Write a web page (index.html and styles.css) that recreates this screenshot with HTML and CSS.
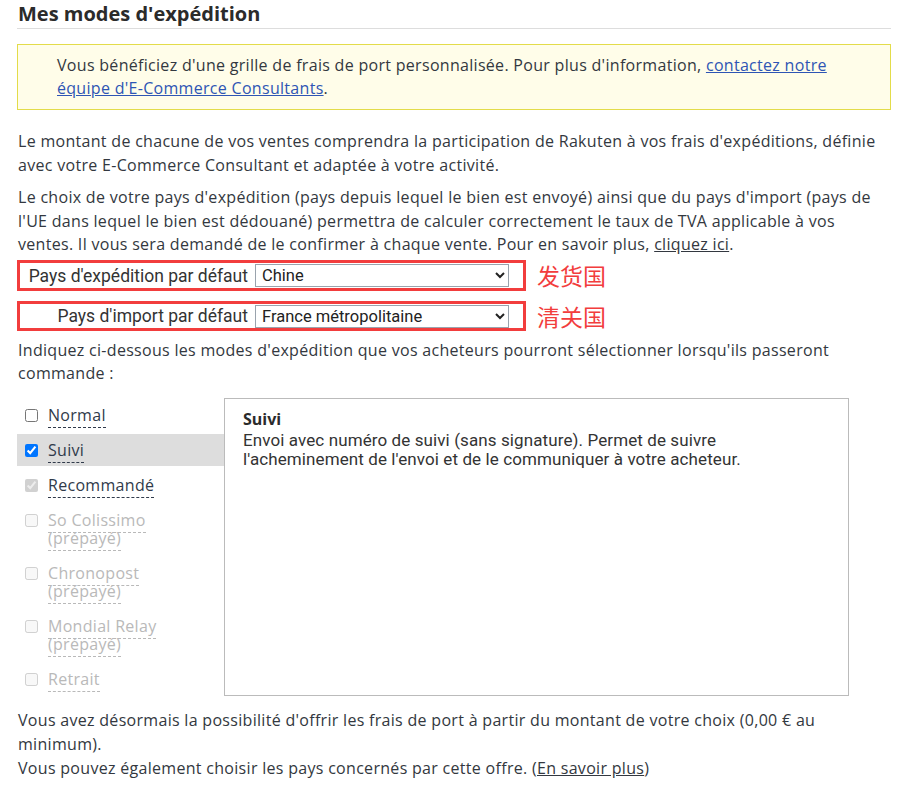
FILE: index.html
```html
<!DOCTYPE html>
<html lang="fr">
<head>
<meta charset="utf-8">
<title>Mes modes d'expédition</title>
<link rel="stylesheet" href="styles.css">
</head>
<body>
<div class="page">
  <h2 class="title">Mes modes d'expédition</h2>

  <div class="notice">
    Vous bénéficiez d'une grille de frais de port personnalisée. Pour plus d'information, <a href="#" class="link-blue">contactez notre équipe d'E-Commerce Consultants</a>.
  </div>

  <p class="para p1">Le montant de chacune de vos ventes comprendra la participation de Rakuten à vos frais d'expéditions, définie avec votre E-Commerce Consultant et adaptée à votre activité.</p>

  <p class="para p2">Le choix de votre pays d'expédition (pays depuis lequel le bien est envoyé) ainsi que du pays d'import (pays de l'UE dans lequel le bien est dédouané) permettra de calculer correctement le taux de TVA applicable à vos ventes. Il vous sera demandé de le confirmer à chaque vente. Pour en savoir plus, <a href="#" class="link-dark">cliquez ici</a>.</p>

  <div class="form-line first">
    <div class="form-row">
      <label class="form-label" for="exp">Pays d'expédition par défaut</label>
      <select id="exp" class="form-select"><option>Chine</option></select>
    </div>
    <span class="note">发货国</span>
  </div>
  <div class="form-line second">
    <div class="form-row">
      <label class="form-label" for="imp">Pays d'import par défaut</label>
      <select id="imp" class="form-select"><option>France métropolitaine</option></select>
    </div>
    <span class="note">清关国</span>
  </div>

  <p class="para p3">Indiquez ci-dessous les modes d'expédition que vos acheteurs pourront sélectionner lorsqu'ils passeront commande :</p>

  <div class="modes">
    <ul class="mode-list">
      <li class="mode"><input type="checkbox"><div class="mode-label"><span class="mode-name">Normal</span></div></li>
      <li class="mode active"><input type="checkbox" checked><div class="mode-label"><span class="mode-name">Suivi</span></div></li>
      <li class="mode"><input type="checkbox" checked disabled><div class="mode-label"><span class="mode-name">Recommandé</span></div></li>
      <li class="mode disabled"><input type="checkbox" disabled><div class="mode-label"><span class="mode-name">So Colissimo (prépayé)</span></div></li>
      <li class="mode disabled"><input type="checkbox" disabled><div class="mode-label"><span class="mode-name">Chronopost (prépayé)</span></div></li>
      <li class="mode disabled"><input type="checkbox" disabled><div class="mode-label"><span class="mode-name">Mondial Relay (prépayé)</span></div></li>
      <li class="mode disabled"><input type="checkbox" disabled><div class="mode-label"><span class="mode-name">Retrait</span></div></li>
    </ul>
    <div class="mode-detail">
      <div class="detail-title">Suivi</div>
      <div class="detail-text">Envoi avec numéro de suivi (sans signature). Permet de suivre<br>l'acheminement de l'envoi et de le communiquer à votre acheteur.</div>
    </div>
  </div>

  <p class="para p4">Vous avez désormais la possibilité d'offrir les frais de port à partir du montant de votre choix (0,00 € au minimum).<br>Vous pouvez également choisir les pays concernés par cette offre. (<a href="#" class="link-dark">En savoir plus</a>)</p>
</div>
</body>
</html>
```

FILE: styles.css
```css
html, body {
  margin: 0;
  padding: 0;
  background: #ffffff;
}

body {
  font-family: "Open Sans", "Noto Sans", sans-serif;
  font-size: 16px;
  letter-spacing: 0.3px;
  color: #333840;
}

.page {
  width: 874px;
  padding: 0 0 0 17px;
}

.title {
  margin: 0;
  padding: 0 0 0 1px;
  height: 28px;
  line-height: 27px;
  font-size: 20px;
  letter-spacing: 0;
  font-weight: 700;
  color: #2b2b2b;
  border-bottom: 1px solid #dddddd;
}

.notice {
  margin-top: 15px;
  background: #fffde9;
  border: 1px solid #e3dc4a;
  padding: 9px 40px 9px 39px;
  line-height: 23px;
  height: 46px;
}

.link-blue {
  color: #2e55b4;
  text-decoration: underline;
}

.link-dark {
  color: #333840;
  text-decoration: underline;
}

.para {
  margin: 0;
  padding-left: 1px;
  line-height: 23.5px;
}

.p1 { margin-top: 20px; }
.p2 { margin-top: 9px; }
.p3 { margin-top: 8px; }
.p4 { margin-top: 12px; line-height: 24px; }

.form-line {
  display: flex;
  align-items: center;
}

.form-line.first { margin-top: 3px; }
.form-line.second { margin-top: 10px; }

.form-row {
  display: flex;
  align-items: center;
  width: 503px;
  border: 3px solid #f23d3d;
  padding: 1px 0 0;
  height: 24px;
}

.form-line.second .form-row {
  height: 23px;
}

.form-label {
  width: 228px;
  text-align: right;
  font-family: Roboto, "Noto Sans", sans-serif;
  font-size: 17.5px;
  letter-spacing: 0;
  color: #333333;
  padding-right: 7px;
}

.form-select {
  width: 254px;
  height: 23px;
  border: 1px solid #9aa3ad;
  border-radius: 0;
  background: #ffffff;
  font-family: Roboto, "Noto Sans", sans-serif;
  font-size: 16.5px;
  letter-spacing: 0;
  color: #222222;
  padding: 0 2px;
}

.note {
  margin-left: 11px;
  font-family: "Noto Sans CJK SC", sans-serif;
  font-size: 23px;
  letter-spacing: 0;
  line-height: 28px;
  color: #f23d3d;
}

.modes {
  display: flex;
  align-items: flex-start;
  margin-top: 12px;
}

.mode-list {
  list-style: none;
  margin: 0;
  padding: 1px 0 0;
  width: 207px;
}

.mode {
  display: flex;
  align-items: flex-start;
  padding: 7px 0 7px 8px;
  margin-bottom: 3px;
  line-height: 18px;
}

.mode:last-child {
  margin-bottom: 0;
}

.mode.active {
  background: #dddddd;
}

.mode input {
  margin: 3px 10px 0 0;
  width: 13px;
  height: 13px;
  flex: none;
}

.mode-label {
  width: 120px;
}

.mode-name {
  color: #303a4a;
  border-bottom: 1px dashed #303a4a;
  padding-bottom: 1px;
}

.mode.disabled .mode-name {
  color: #b9b9b9;
  border-bottom-color: #b9b9b9;
}

.mode-detail {
  width: 605px;
  height: 286px;
  border: 1px solid #bbbbbb;
  padding: 10px 0 0 18px;
}

.detail-title {
  font-weight: 700;
  font-size: 16px;
  letter-spacing: 0;
  line-height: 20px;
  color: #2b2b2b;
}

.detail-text {
  margin-top: 2px;
  font-family: Roboto, sans-serif;
  font-size: 17px;
  letter-spacing: 0.1px;
  line-height: 19px;
  color: #333333;
}
```
